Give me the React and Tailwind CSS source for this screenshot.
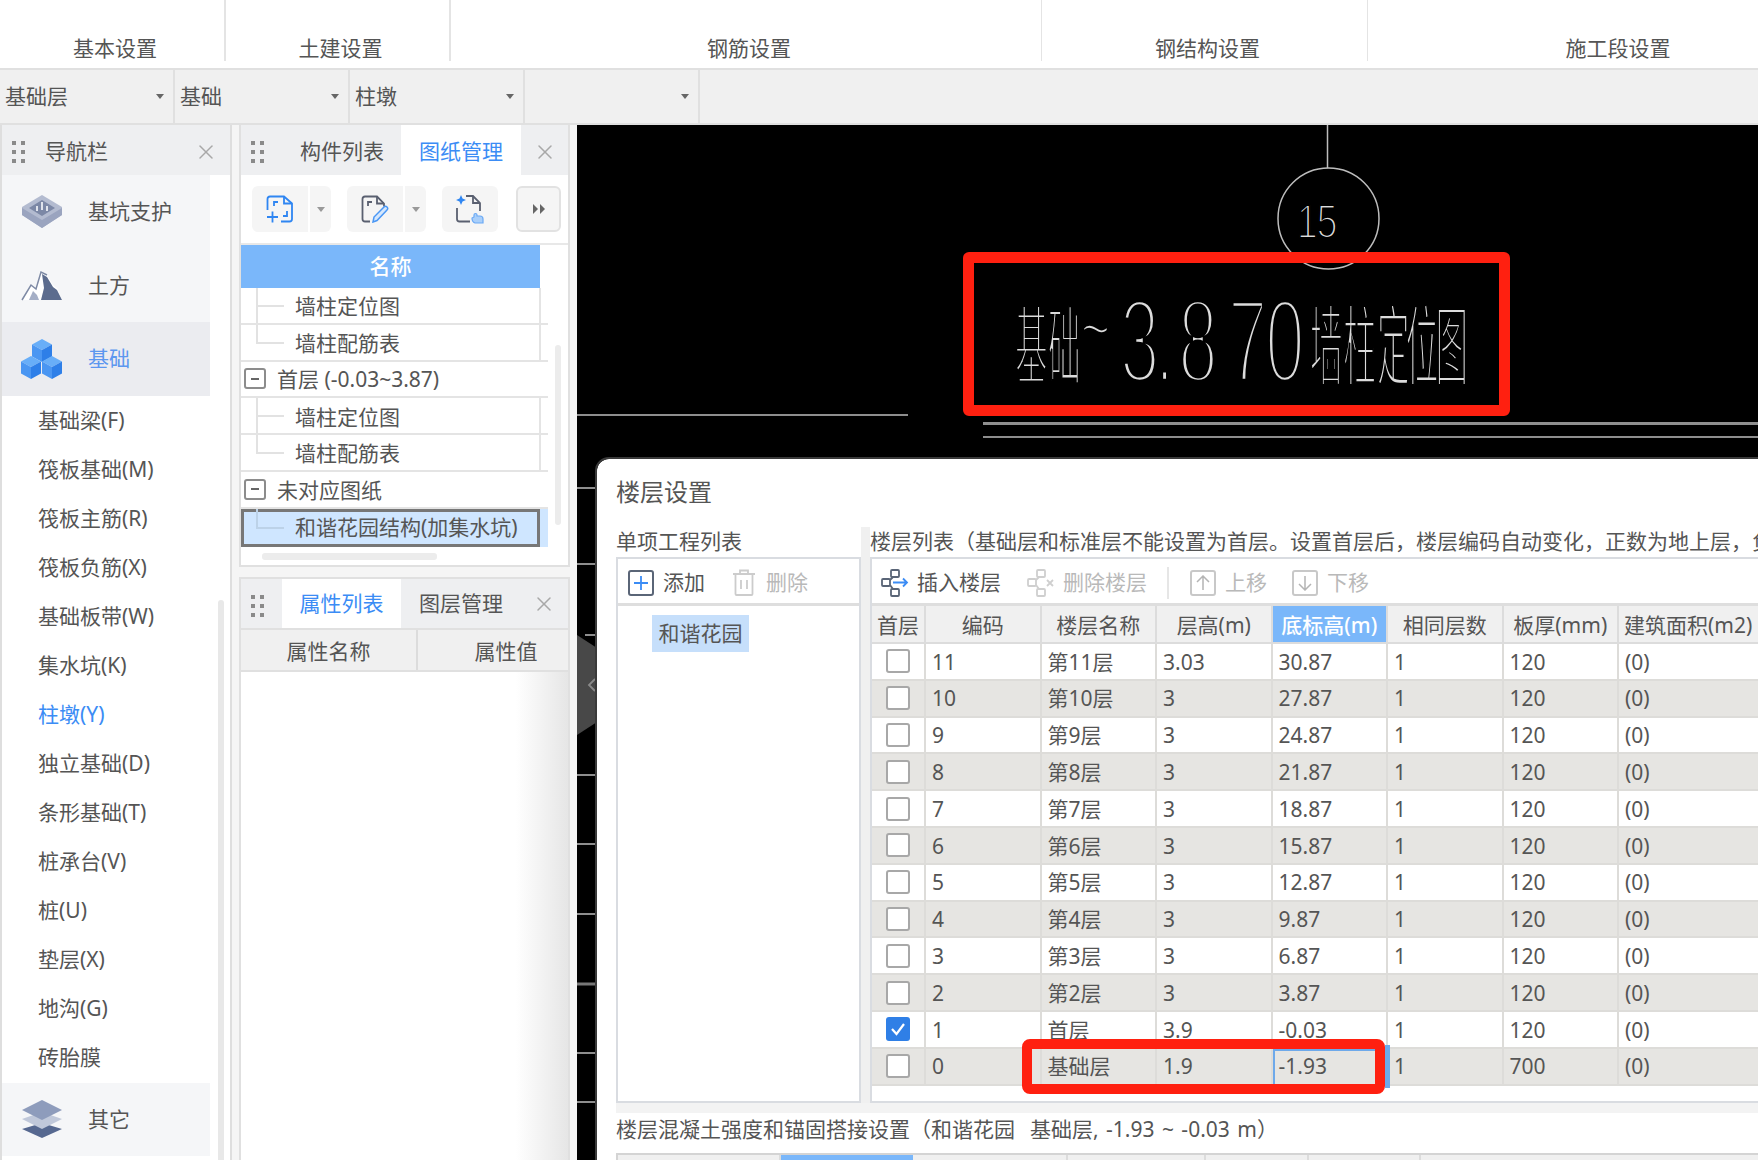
import React from "react";
import { X } from "lucide-react";

const subItems = ["基础梁(F)", "筏板基础(M)", "筏板主筋(R)", "筏板负筋(X)", "基础板带(W)", "集水坑(K)", "柱墩(Y)", "独立基础(D)", "条形基础(T)", "桩承台(V)", "桩(U)", "垫层(X)", "地沟(G)", "砖胎膜"];

const floors = [
  ["11", "第11层", "3.03", "30.87", "120"],
  ["10", "第10层", "3", "27.87", "120"],
  ["9", "第9层", "3", "24.87", "120"],
  ["8", "第8层", "3", "21.87", "120"],
  ["7", "第7层", "3", "18.87", "120"],
  ["6", "第6层", "3", "15.87", "120"],
  ["5", "第5层", "3", "12.87", "120"],
  ["4", "第4层", "3", "9.87", "120"],
  ["3", "第3层", "3", "6.87", "120"],
  ["2", "第2层", "3", "3.87", "120"],
  ["1", "首层", "3.9", "-0.03", "120"],
  ["0", "基础层", "1.9", "-1.93", "700"],
];

function Dots() {
  return (
    <div className="grid grid-cols-2 gap-x-[5px] gap-y-[5px] w-[13px] shrink-0 translate-y-[2px]">
      {[0, 1, 2, 3, 4, 5].map((i) => (
        <span key={i} className="w-[4px] h-[4px] bg-[#8a8a8a]" />
      ))}
    </div>
  );
}

function Caret() {
  return <span className="block w-0 h-0 border-x-[4px] border-x-transparent border-t-[5px] border-t-[#666]" />;
}

function Select({ label }) {
  return (
    <div className="w-[175px] border-r-2 border-[#e0e0e0] flex items-center justify-between pl-[5px] pr-[9px] text-[21px] text-[#555]">
      <span>{label}</span>
      <Caret />
    </div>
  );
}

function PitIcon() {
  return (
    <svg width="42" height="35" viewBox="0 0 42 35">
      <path d="M21 1 41 13V21L21 34 1 21V13Z" fill="#b3bbd0" />
      <path d="M1 14 21 26 41 14V21L21 34 1 21Z" fill="#9aa4bf" />
      <path d="M21 6 34 14 21 22 8 14Z" fill="#7c88a6" />
      <path d="M20 8h2v8h-2zM15 12h2v5h-2zM25 12h2v5h-2z" fill="#dfe3ec" />
    </svg>
  );
}

function MountainIcon() {
  return (
    <svg width="42" height="31" viewBox="0 0 42 31">
      <path d="M1 30 10 15 14 18 20 2 26 5 32 15 36 18 41 30Z" fill="#fff" />
      <path d="M21 4 26 7 32 17 36 20 41 30H20L23 18Z" fill="#5c6c8e" />
      <path d="M1 30 10 15 15 19 20 2 26 5" fill="none" stroke="#7e8aa5" strokeWidth="1.5" />
      <path d="M8 30 12 21 16 25 18 30Z" fill="#a5afc6" />
    </svg>
  );
}

function Cube({ x, y }) {
  return (
    <g transform={`translate(${x} ${y})`}>
      <path d="M10 0 20 5.5 10 11 0 5.5Z" fill="#68aef8" />
      <path d="M0 5.5 10 11V23L0 17.5Z" fill="#4a96f2" />
      <path d="M20 5.5 10 11V23L20 17.5Z" fill="#2e7fe8" />
    </g>
  );
}

function CubesIcon() {
  return (
    <svg width="42" height="40" viewBox="0 0 42 40">
      <Cube x="11" y="0" />
      <Cube x="0" y="17" />
      <Cube x="21" y="17" />
    </svg>
  );
}

function LayersIcon() {
  return (
    <svg width="42" height="40" viewBox="0 0 42 40">
      <path d="M21 24 41 30 21 39 1 30Z" fill="#566890" />
      <path d="M21 13 41 20 21 30 1 20Z" fill="#c0c8da" />
      <path d="M21 1 41 11 21 21 1 11Z" fill="#8e9cbc" />
    </svg>
  );
}

function NavBig({ icon, label, active }) {
  return (
    <div className={`h-[73.5px] w-[208px] flex items-center ${active ? "bg-[#ebecf0]" : "bg-[#f5f6f8]"}`}>
      <div className="w-[42px] ml-[19px] flex justify-center">{icon}</div>
      <span className={`ml-[25px] text-[21px] ${active ? "text-[#5c97ef]" : "text-[#555]"}`}>{label}</span>
    </div>
  );
}

function ImportIcon() {
  return (
    <svg width="28" height="28" viewBox="0 0 28 28" fill="none" stroke="#2f86f2" strokeWidth="1.8">
      <path d="M1.5 15V4q0-2.5 2.5-2.5H18l8 7V24q0 2.5-2.5 2.5H15" />
      <path d="M18 1.5V8.5H26" />
      <path d="M8 11V7h4M21 16v5h-4" />
      <path d="M1 22h11M6.5 16.5v11" />
    </svg>
  );
}

function EditIcon() {
  return (
    <svg width="28" height="28" viewBox="0 0 28 28" fill="none" strokeWidth="1.8">
      <path d="M9 26.500H4q-2.500 0-2.500-2.500V4Q1.500 1.500 4 1.500H16l7 7v3" stroke="#5a6070" />
      <path d="M16 1.500V8.500H23M7 11V7h4" stroke="#5a6070" />
      <path d="M12 27l1-5L23 12q1.500-1.500 3 0t0 3L16 25.500Z" stroke="#4a97f5" fill="#d5e7fc" strokeWidth="1.500" />
    </svg>
  );
}

function PickIcon() {
  return (
    <svg width="30" height="30" viewBox="0 0 30 30" fill="none" strokeWidth="1.8">
      <path d="M11 2H18l7 7v8M2 14V25q0 2.500 2.500 2.500H15" stroke="#5a6070" />
      <path d="M18 2V9H25" stroke="#5a6070" />
      <path d="M6 1l1.500 3.500L11 6 7.500 7.500 6 11 4.500 7.500 1 6 4.500 4.500Z" fill="#2f86f2" />
      <path d="M20 29q-3-1-3-5l2-1v-2q0-1.500 1.500-1.500T22 21v1h3q3 0 3 3v4Z" fill="#a9cffa" stroke="#6aa9f5" strokeWidth="1.200" />
    </svg>
  );
}

function ToolBtn({ icon }) {
  return (
    <div className="flex gap-[2px]">
      <div className="w-[56px] h-[46px] bg-[#f5f5f5] rounded-l-[6px] flex items-center justify-center">{icon}</div>
      <div className="w-[21px] h-[46px] bg-[#f5f5f5] rounded-r-[6px] flex items-center justify-center">
        <span className="block w-0 h-0 border-x-[4px] border-x-transparent border-t-[5px] border-t-[#999]" />
      </div>
    </div>
  );
}

function TreeLeaf({ label, last }) {
  return (
    <div className="relative h-[36.8px] w-[307px] border-b-2 border-[#e4e4e4] flex items-center pl-[54px] pt-[3px] text-[21px] text-[#555]">
      <span className={`absolute left-[15px] top-0 w-[2px] bg-[#e2e2e2] ${last ? "h-[18px]" : "h-full"}`} />
      <span className="absolute left-[15px] top-[17px] w-[28px] h-[2px] bg-[#e2e2e2]" />
      <span className="absolute left-[298px] top-0 h-full w-[2px] bg-[#e4e4e4]" />
      {label}
    </div>
  );
}

function TreeGroup({ label }) {
  return (
    <div className="relative h-[36.8px] w-[307px] border-b-2 border-[#e4e4e4] flex items-center pl-[3px] text-[21px] text-[#555]">
      <span className="w-[22px] h-[21px] border-2 border-[#8c8c8c] rounded-[3px] flex items-center justify-center mr-[11px]">
        <span className="w-[8px] h-[2px] bg-[#666]" />
      </span>
      <span className="translate-y-[1px]">{label}</span>
    </div>
  );
}

function Cad() {
  return (
    <svg className="absolute inset-0" width="1181" height="1035" viewBox="577 125 1181 1035">
      <g stroke="#bdbdbd" strokeWidth="1.500" fill="none">
        <path d="M1327.500 125V168" />
        <circle cx="1328.500" cy="218.500" r="50.500" />
        <path d="M577 415H908" />
        <path d="M983 437H1758" />
        <path d="M983 423.500H1758" strokeWidth="3" stroke="#8f8f8f" />
        <path d="M577 488H600M577 564H600M585 635H600M577 775H600M577 844H600M577 914H600M577 1053H600M577 1102H600" />
        <path d="M577 984H600" strokeWidth="3" stroke="#777" />
      </g>
      <g fill="#dcdcdc" stroke="#000">
        <g transform="translate(1297 238) scale(.76 1)" fontFamily="Liberation Sans" fontSize="49" strokeWidth="2.200">
          <text x="0 26">15</text>
        </g>
        <g transform="translate(1015 378) scale(.38 1)" fontFamily="Noto Sans CJK SC" fontSize="86" strokeWidth="3.800">
          <text x="0 87">基础</text>
        </g>
        <g transform="translate(1081 356) scale(.62 1)" fontFamily="Liberation Sans" fontSize="80" strokeWidth="3.500">
          <text>~</text>
        </g>
        <g transform="translate(1120 382) scale(.6 1)" fontFamily="Liberation Sans" fontSize="118" strokeWidth="6.500">
          <text x="0 58 97 180 242">3.870</text>
        </g>
        <g transform="translate(1310 378) scale(.37 1)" fontFamily="Noto Sans CJK SC" fontSize="88" strokeWidth="3.800">
          <text x="0 90 181 259 339">墙柱定位图</text>
        </g>
      </g>
    </svg>
  );
}

function HeadCell({ children, active }) {
  return (
    <div className={`border-r-2 border-b-2 border-[#dcdcdc] flex items-center justify-center pt-[3px] whitespace-nowrap ${active ? "bg-[#7ab7fa] text-white font-medium" : "bg-[#f0f0f0]"}`}>
      {children}
    </div>
  );
}

function Cell({ children, className = "" }) {
  return <div className={`border-r-2 border-b-2 border-[#dddcd9] flex items-center pl-[6px] pt-[2px] ${className}`}>{children}</div>;
}

function Check({ checked }) {
  return (
    <div className="border-r-2 border-b-2 border-[#dddcd9] flex items-center justify-center">
      {checked ? (
        <span className="w-[24px] h-[24px] rounded-[3px] bg-[#2f7fe6] flex items-center justify-center">
          <svg width="16" height="14" viewBox="0 0 16 14" fill="none" stroke="#fff" strokeWidth="2.200">
            <path d="M2 7l4.500 5L14 2" />
          </svg>
        </span>
      ) : (
        <span className="w-[24px] h-[24px] rounded-[3px] border-2 border-[#a8a8a8] bg-white" />
      )}
    </div>
  );
}

function InsertIcon({ gray }) {
  const c = gray ? "#cfcfcf" : "#5a6577";
  return (
    <svg width="28" height="28" viewBox="0 0 28 28" fill="none" stroke={c} strokeWidth="1.800">
      <rect x="10" y="1" width="8" height="7" rx="1" />
      <rect x="1" y="10" width="8" height="7" rx="1" />
      <rect x="10" y="20" width="8" height="7" rx="1" />
      <path d="M9 11 12 8M9 16 12 20" />
      {gray ? <path d="M20 11l6 6M26 11l-6 6" /> : <path d="M12 13.500H26M22 9.500l4 4-4 4" stroke="#3b8cf5" />}
    </svg>
  );
}

const gridCols = "grid grid-cols-[54px_repeat(6,115.5px)_1fr]";

function FloorDialog() {
  return (
    <div className="relative flex-1 bg-white rounded-tl-[12px] pl-[19px] flex flex-col text-[#555] text-[21px] outline-2 outline-[#3a3a3a]">
      <div className="h-[66px] flex items-center text-[24px]">楼层设置</div>
      <div className="flex h-[578px]">
        <div className="w-[245px] shrink-0">
          <div className="h-[32px] flex items-center pt-[2px] whitespace-nowrap">单项工程列表</div>
          <div className="h-[546px] border-2 border-[#d9dce1]">
            <div className="h-[47px] border-b-[3px] border-[#dedede] flex items-center pl-[10px] pt-[3px]">
              <span className="w-[26px] h-[26px] border-2 border-[#5a6577] rounded-[3px] flex items-center justify-center">
                <svg width="16" height="16" viewBox="0 0 16 16" stroke="#3b8cf5" strokeWidth="1.800">
                  <path d="M8 1V15M1 8H15" />
                </svg>
              </span>
              <span className="ml-[9px]">添加</span>
              <svg className="ml-[27px]" width="24" height="27" viewBox="0 0 24 27" fill="none" stroke="#cccccc" strokeWidth="1.800">
                <path d="M1 5H23M8 5V1.500H16V5M3.500 5V25q0 1 1 1H19.500q1 0 1-1V5M9 11V20M15 11V20" />
              </svg>
              <span className="ml-[10px] text-[#b9b9b9]">删除</span>
            </div>
            <div className="ml-[34px] mt-[9px] w-[97px] h-[37px] bg-[#c6dffb] flex items-center justify-center">和谐花园</div>
          </div>
        </div>
        <div className="w-[9px] shrink-0 mt-[2px] bg-[#f0f0f0]" />
        <div className="flex-1 min-w-0 overflow-hidden">
          <div className="h-[32px] flex items-center pt-[2px] whitespace-nowrap">楼层列表（基础层和标准层不能设置为首层。设置首层后，楼层编码自动变化，正数为地上层，负数为地下层，基础层编码固定为 0）</div>
          <div className="h-[546px] border-2 border-r-0 border-[#d9dce1] flex flex-col">
            <div className="h-[47px] border-b-[3px] border-[#dedede] flex items-center pl-[9px] pt-[3px] shrink-0">
              <InsertIcon />
              <span className="ml-[8px]">插入楼层</span>
              <span className="ml-[26px]"><InsertIcon gray /></span>
              <span className="ml-[8px] text-[#b9b9b9]">删除楼层</span>
              <span className="ml-[20px] w-[2px] h-[32px] bg-[#e6e6e6]" />
              <span className="ml-[21px] w-[26px] h-[26px] border-2 border-[#c8c8c8] rounded-[3px] flex items-center justify-center">
                <svg width="14" height="16" viewBox="0 0 14 16" fill="none" stroke="#b4b4b4" strokeWidth="1.500"><path d="M7 15V1M1 7l6-6 6 6" /></svg>
              </span>
              <span className="ml-[9px] text-[#b9b9b9]">上移</span>
              <span className="ml-[25px] w-[26px] h-[26px] border-2 border-[#c8c8c8] rounded-[3px] flex items-center justify-center">
                <svg width="14" height="16" viewBox="0 0 14 16" fill="none" stroke="#b4b4b4" strokeWidth="1.500"><path d="M7 1V15M1 9l6 6 6-6" /></svg>
              </span>
              <span className="ml-[9px] text-[#b9b9b9]">下移</span>
            </div>
            <div className={`${gridCols} h-[38px] shrink-0`}>
              <HeadCell>首层</HeadCell>
              <HeadCell>编码</HeadCell>
              <HeadCell>楼层名称</HeadCell>
              <HeadCell>层高(m)</HeadCell>
              <HeadCell active>底标高(m)</HeadCell>
              <HeadCell>相同层数</HeadCell>
              <HeadCell>板厚(mm)</HeadCell>
              <HeadCell><span className="w-full pl-[5px]">建筑面积(m2)</span></HeadCell>
            </div>
            {floors.map((f, i) => (
              <div key={f[0]} className={`${gridCols} h-[36.8px] shrink-0 ${i % 2 === 1 ? "bg-[#e6e5e2]" : "bg-white"}`}>
                <Check checked={f[0] === "1"} />
                <Cell>{f[0]}</Cell>
                <Cell className="pl-[4px]">{f[1]}</Cell>
                <Cell>{f[2]}</Cell>
                <Cell className={f[0] === "0" ? "outline-2 -outline-offset-2 outline-[#6ea9ea]" : ""}>{f[3]}</Cell>
                <Cell>1</Cell>
                <Cell>{f[4]}</Cell>
                <Cell>(0)</Cell>
              </div>
            ))}
          </div>
        </div>
      </div>
      <div className="h-[10px] bg-[#f3f3f3] shrink-0" />
      <div className="h-[40px] flex items-center pb-[7px] whitespace-nowrap shrink-0 [word-spacing:2px]">楼层混凝土强度和锚固搭接设置（和谐花园&nbsp;&nbsp;基础层, -1.93 ~ -0.03 m）</div>
      <div className="flex flex-1 border-t-2 border-l-2 border-[#d4d4d4] bg-[#f0f0f0]">
        <div className="w-[163px] border-r-2 border-[#dcdcdc]" />
        <div className="w-[132px] bg-[#7ab7fa]" />
        <div className="w-[155px] border-r-2 border-[#dcdcdc]" />
        <div className="w-[138px] border-r-2 border-[#dcdcdc]" />
        <div className="w-[103px] border-r-2 border-[#dcdcdc]" />
        <div className="w-[112px] border-r-2 border-[#dcdcdc]" />
      </div>
    </div>
  );
}

function RibbonCell({ className, label }) {
  return (
    <div className={`flex items-end justify-center ${className}`}>
      <span className="-mb-[3px] translate-x-[3px]">{label}</span>
    </div>
  );
}

export default function App() {
  return (
    <div className="relative w-[1758px] h-[1160px] overflow-hidden bg-[#f5f5f5] flex flex-col font-['Noto_Sans','Noto_Sans_CJK_SC',sans-serif] text-[#555]">
      <div className="h-[68px] shrink-0 bg-white flex text-[21px] text-[#555] pb-[7px]">
        <RibbonCell className="w-[226px] border-r-2 border-[#e4e4e4]" label="基本设置" />
        <RibbonCell className="w-[225px] border-r-2 border-[#e4e4e4]" label="土建设置" />
        <RibbonCell className="w-[591px] border-r border-[#e4e4e4]" label="钢筋设置" />
        <RibbonCell className="w-[326px] border-r border-[#e4e4e4]" label="钢结构设置" />
        <RibbonCell className="flex-1 pl-[104px]" label="施工段设置" />
      </div>
      <div className="h-[57px] shrink-0 bg-[#f0f0f0] border-t-2 border-b-2 border-[#e0e0e0] flex">
        <Select label="基础层" />
        <Select label="基础" />
        <Select label="柱墩" />
        <Select label="" />
      </div>

      <div className="flex-1 flex min-h-0">
        <aside className="relative w-[232px] shrink-0 bg-white border-l-2 border-r-2 border-[#dedede]">
          <div className="h-[50px] bg-[#eeeff1] flex items-center pl-[10px] pr-[12px] text-[21px]">
            <Dots />
            <span className="ml-[20px] flex-1 translate-y-[2px]">导航栏</span>
            <X size={24} strokeWidth={1.500} className="text-[#a8a8a8] translate-y-[2px]" />
          </div>
          <NavBig icon={<PitIcon />} label="基坑支护" />
          <NavBig icon={<MountainIcon />} label="土方" />
          <NavBig icon={<CubesIcon />} label="基础" active />
          <div className="pt-[1px]">
            {subItems.map((s) => (
              <div key={s} className={`h-[49px] flex items-center pl-[36px] text-[21px] ${s === "柱墩(Y)" ? "text-[#3b8cf5]" : "text-[#555]"}`}>{s}</div>
            ))}
          </div>
          <NavBig icon={<LayersIcon />} label="其它" />
          <span className="absolute left-[216px] top-[475px] bottom-0 w-[6px] rounded-t-[3px] bg-[#e8e8e8]" />
        </aside>

        <div className="w-[338px] ml-[7px] shrink-0 flex flex-col">
          <div className="relative h-[442px] shrink-0 w-[331px] bg-white border-l-2 border-r-2 border-b-2 border-[#e0e0e0]">
            <div className="h-[50px] bg-[#eeeff1] flex items-center text-[21px]">
              <div className="ml-[10px] mr-[36px]"><Dots /></div>
              <span className="translate-y-[2px]">构件列表</span>
              <span className="ml-[17px] w-[120px] h-full bg-white text-[#3b8cf5] flex items-center justify-center pt-[3px]">图纸管理</span>
              <X size={24} strokeWidth={1.500} className="ml-[12px] text-[#a8a8a8] translate-y-[2px]" />
            </div>
            <div className="h-[70px] border-b-2 border-[#e8e8e8] flex items-center pl-[11px] gap-[16px]">
              <ToolBtn icon={<ImportIcon />} />
              <ToolBtn icon={<EditIcon />} />
              <div className="w-[56px] h-[46px] bg-[#f5f5f5] rounded-[6px] flex items-center justify-center"><PickIcon /></div>
              <div className="ml-[2px] w-[45px] h-[46px] bg-[#f5f5f5] border-2 border-[#e2e2e2] rounded-[6px] flex items-center justify-center gap-[2px]">
                <span className="block w-0 h-0 border-y-[5px] border-y-transparent border-l-[5px] border-l-[#666]" />
                <span className="block w-0 h-0 border-y-[5px] border-y-transparent border-l-[5px] border-l-[#666]" />
              </div>
            </div>
            <div className="w-[299px] h-[43px] bg-[#7ab7fa] text-white font-medium flex items-center justify-center text-[21px]">名称</div>
            <TreeLeaf label="墙柱定位图" />
            <TreeLeaf label="墙柱配筋表" last />
            <TreeGroup label="首层 (-0.03~3.87)" />
            <TreeLeaf label="墙柱定位图" />
            <TreeLeaf label="墙柱配筋表" last />
            <TreeGroup label="未对应图纸" />
            <div className="w-[307px] h-[38px] bg-[#cfe6ff] text-[21px] text-[#555]">
              <div className="relative w-[299px] h-full border-[3px] border-[#777] flex items-center pl-[51px] whitespace-nowrap">
                <span className="absolute left-[12px] -top-[3px] h-[20px] w-[2px] bg-[#bcd2e8]" />
                <span className="absolute left-[12px] top-[15px] w-[28px] h-[2px] bg-[#bcd2e8]" />
                和谐花园结构(加集水坑)
              </div>
            </div>
            <span className="absolute left-[314px] top-[220px] h-[180px] w-[6px] rounded-[3px] bg-[#ececec]" />
            <span className="absolute left-[21px] top-[428px] h-[7px] w-[175px] rounded-[3px] bg-[#ececec]" />
          </div>

          <div className="mt-[10px] flex-1 w-[331px] flex flex-col border-l-2 border-r-2 border-t-2 border-[#e0e0e0] bg-linear-to-r from-white from-[84%] to-[#e6e6e6]">
            <div className="h-[49px] shrink-0 bg-[#eeeff1] flex items-center text-[21px]">
              <div className="ml-[10px] mr-[18px]"><Dots /></div>
              <span className="w-[119px] h-full bg-white text-[#3b8cf5] flex items-center justify-center">属性列表</span>
              <span className="ml-[18px]">图层管理</span>
              <X size={24} strokeWidth={1.500} className="ml-[29px] text-[#a8a8a8]" />
            </div>
            <div className="h-[44px] shrink-0 bg-[#f0f0f0] border-t-2 border-b-2 border-[#e0e0e0] flex text-[21px]">
              <div className="w-[177px] border-r-2 border-[#dcdcdc] flex items-center justify-center pt-[3px]">属性名称</div>
              <div className="flex-1 flex items-center justify-center pl-[26px] pt-[3px]">属性值</div>
            </div>
          </div>
        </div>

        <div className="relative flex-1 min-w-0 bg-black flex pl-[20px] pt-[334px]">
          <Cad />
          <div className="absolute left-0 top-[510px] w-[20px] h-[100px] bg-[#484848] [clip-path:polygon(0_0,100%_13%,100%_87%,0_100%)] flex items-center justify-end pr-[1px]">
            <svg width="9" height="14" viewBox="0 0 9 14" fill="none" stroke="#8a8a8a" strokeWidth="1.800">
              <path d="M8 1 2 7l6 6" />
            </svg>
          </div>
          <FloorDialog />
        </div>
      </div>

      <div className="absolute left-[963px] top-[252px] w-[547px] h-[164px] border-[11px] border-[#ff2010] rounded-[6px]" />
      <div className="absolute left-[1385px] top-[1045px] w-[5px] h-[43px] bg-[#6ea9ea]" />
      <div className="absolute left-[1022px] top-[1039px] w-[363px] h-[55px] border-[10px] border-[#ff2010] rounded-[8px]" />
    </div>
  );
}
